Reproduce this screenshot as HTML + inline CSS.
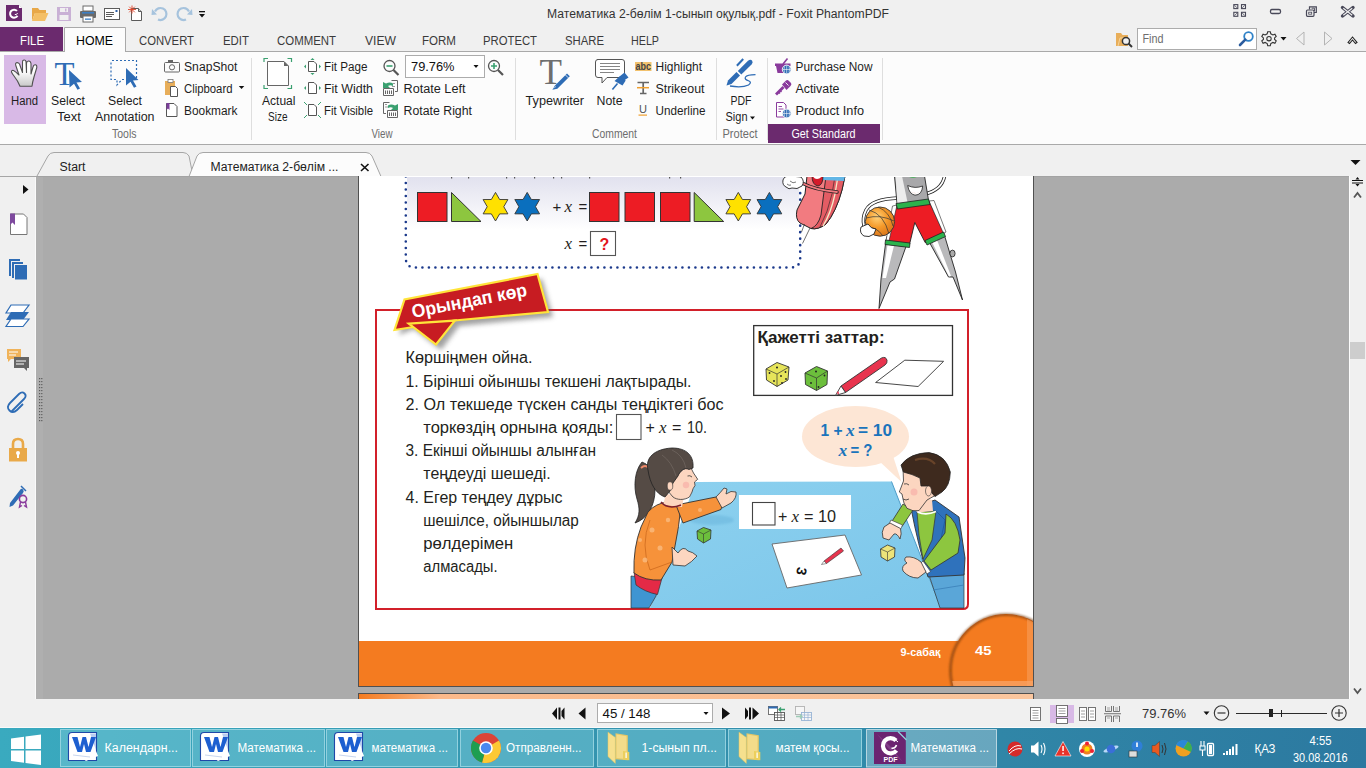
<!DOCTYPE html>
<html><head><meta charset="utf-8">
<style>
*{margin:0;padding:0}
html,body{width:1366px;height:768px;overflow:hidden;background:#f0f0f0}
svg{position:absolute;left:0;top:0;font-family:"Liberation Sans",sans-serif}
text{white-space:pre}
</style></head><body>
<svg width="1366" height="768" viewBox="0 0 1366 768">
<rect x="0" y="0" width="1366" height="52" fill="#f0f0f0"/>
<rect x="0" y="51" width="1366" height="1" fill="#a9a9a9"/>
<rect x="0" y="52" width="1366" height="92" fill="#fcfcfc"/>
<rect x="0" y="144" width="1366" height="1" fill="#a9a9a9"/>
<rect x="0" y="145" width="1366" height="31" fill="#f0f0f0"/>
<path d="M6 5 H19 L22 8 V21 H6 Z" fill="#6b2a6e"/>
<path d="M19 5 V8 H22 Z" fill="#f0f0f0"/><path d="M19 5 L22 8 H19 Z" fill="#fff"/>
<path d="M17 10.9 A4 4 0 1 0 17.5 15.8" fill="none" stroke="#fff" stroke-width="2"/><path d="M14.8 14.6 Q16.8 15 17.6 13" fill="none" stroke="#fff" stroke-width="1"/>
<path d="M32 8 H38 L39.5 10 H46 V13 H35 L32 21 Z" fill="#e8a848"/>
<path d="M35 13 H48.5 L45 21 H32 Z" fill="#f4bf66"/>
<rect x="57" y="7" width="14" height="14" fill="#c9b1d5"/>
<rect x="60" y="8" width="8" height="4" fill="#f0f0f0"/><rect x="65" y="8.5" width="1.5" height="3" fill="#c9b1d5"/>
<rect x="59.5" y="15" width="9" height="5" fill="#f0f0f0"/>
<rect x="83" y="6" width="10" height="5" fill="#fff" stroke="#6a6a6a"/>
<rect x="80" y="11" width="16" height="7" rx="1" fill="#6a6a6a"/>
<rect x="82" y="12" width="12" height="1.6" fill="#3c7fc4"/>
<rect x="83" y="16" width="10" height="6" fill="#fff" stroke="#6a6a6a"/>
<rect x="85" y="18.5" width="6" height="1.3" fill="#3c7fc4"/>
<rect x="104.5" y="8.5" width="15" height="11" fill="#fff" stroke="#5a5a5a"/>
<rect x="106" y="12" width="8" height="1" fill="#5a5a5a"/><rect x="106" y="14" width="8" height="1" fill="#5a5a5a"/><rect x="106" y="16" width="6" height="1" fill="#5a5a5a"/>
<rect x="115.5" y="10" width="2" height="2" fill="#2b5fa8"/>
<path d="M131.5 8.5 H138.5 L141.5 11.5 V20.5 H131.5 Z" fill="#fff" stroke="#5a5a5a"/>
<path d="M138.5 8.5 V11.5 H141.5" fill="#ccc" stroke="#5a5a5a"/>
<path d="M132 5.5 V13.5 M128 9.5 H136 M129.2 6.7 L134.8 12.3 M134.8 6.7 L129.2 12.3" stroke="#e0452a" stroke-width="0.9"/>
<path d="M155 11.5 A6 6 0 1 1 158 19.5" fill="none" stroke="#a6c3dd" stroke-width="2.2"/>
<path d="M152 9 L157 14.5 L151.5 15 Z" fill="#a6c3dd"/>
<path d="M189 11.5 A6 6 0 1 0 186 19.5" fill="none" stroke="#a6c3dd" stroke-width="2.2"/>
<path d="M192 9 L187 14.5 L192.5 15 Z" fill="#a6c3dd"/>
<rect x="199" y="11" width="6" height="1.3" fill="#111"/><path d="M199 14 H205 L202 17.5 Z" fill="#111"/>
<text x="547" y="17.8" font-size="12.5" fill="#333" textLength="342" lengthAdjust="spacingAndGlyphs">Математика 2-бөлім 1-сынып оқулық.pdf - Foxit PhantomPDF</text>
<g stroke="#484858" stroke-width="1.1" fill="none"><rect x="1233.8" y="4.6" width="4" height="4"/><rect x="1241.5" y="4.6" width="4" height="4"/><rect x="1233.8" y="12.3" width="4" height="4"/><rect x="1241.5" y="12.3" width="4" height="4"/><path d="M1234.5 5.3 L1237 7.8 M1244.8 5.3 L1242.3 7.8 M1234.5 15.6 L1237 13.1 M1244.8 15.6 L1242.3 13.1" stroke-width="0.8"/><rect x="1270.5" y="9.5" width="10" height="4" rx="1.5" stroke-width="1.3"/><path d="M1309.5 9.5 V6.8 H1316.3 V12.5 H1314" stroke-width="1.2"/><path d="M1311.8 8.5 V8.2 H1314.5 V11" stroke-width="0.9"/><rect x="1306.5" y="10" width="7.5" height="6.3" rx="1" stroke-width="1.2"/><rect x="1308.7" y="12.2" width="3" height="2" stroke-width="0.8"/></g>
<path d="M1342.5 7.5 L1353 16 M1353 7.5 L1342.5 16" stroke="#484858" stroke-width="3.4" stroke-linecap="round"/><path d="M1343.3 8.2 L1352.2 15.3 M1352.2 8.2 L1343.3 15.3" stroke="#f0f0f0" stroke-width="1.2"/>
<rect x="0" y="27" width="63" height="24" fill="#6b2a6e"/>
<path d="M64.5 52 V27.5 H125.5 V52" fill="#fcfcfc" stroke="#a9a9a9"/>
<rect x="65" y="50" width="60" height="3" fill="#fcfcfc"/>
<text x="20" y="45" font-size="12.5" fill="#fff" textLength="24" lengthAdjust="spacingAndGlyphs">FILE</text>
<text x="76" y="45" font-size="12.5" fill="#000" textLength="37" lengthAdjust="spacingAndGlyphs">HOME</text>
<text x="139" y="45" font-size="12.5" fill="#3a3a3a" textLength="55" lengthAdjust="spacingAndGlyphs">CONVERT</text>
<text x="223" y="45" font-size="12.5" fill="#3a3a3a" textLength="26" lengthAdjust="spacingAndGlyphs">EDIT</text>
<text x="277" y="45" font-size="12.5" fill="#3a3a3a" textLength="59" lengthAdjust="spacingAndGlyphs">COMMENT</text>
<text x="365" y="45" font-size="12.5" fill="#3a3a3a" textLength="31" lengthAdjust="spacingAndGlyphs">VIEW</text>
<text x="422" y="45" font-size="12.5" fill="#3a3a3a" textLength="34" lengthAdjust="spacingAndGlyphs">FORM</text>
<text x="483" y="45" font-size="12.5" fill="#3a3a3a" textLength="54" lengthAdjust="spacingAndGlyphs">PROTECT</text>
<text x="565" y="45" font-size="12.5" fill="#3a3a3a" textLength="39" lengthAdjust="spacingAndGlyphs">SHARE</text>
<text x="631" y="45" font-size="12.5" fill="#3a3a3a" textLength="28" lengthAdjust="spacingAndGlyphs">HELP</text>
<path d="M1116 33 H1121 L1122.5 35 H1128 V46 H1116 Z" fill="#e8ae5a"/>
<path d="M1118 46 L1120 38 H1126" fill="none" stroke="#f6d49a" stroke-width="1"/>
<circle cx="1126" cy="41" r="3.6" fill="#f0f0f0" stroke="#333" stroke-width="1.5"/><path d="M1128.5 43.5 L1132 47" stroke="#333" stroke-width="2"/>
<rect x="1137.5" y="28.5" width="119" height="21" fill="#fff" stroke="#acacac"/>
<text x="1142.5" y="42.8" font-size="12.5" fill="#6d6d6d" textLength="21" lengthAdjust="spacingAndGlyphs">Find</text>
<circle cx="1248.5" cy="36.5" r="4.3" fill="none" stroke="#2f82c8" stroke-width="1.8"/><path d="M1245.3 39.7 L1240 45" stroke="#2b5c9e" stroke-width="2.6" stroke-linecap="round"/>
<g transform="translate(1269,38.7)" fill="none" stroke="#333" stroke-width="1.1"><path d="M-1.3 -7 H1.3 L1.8 -4.9 L3.9 -3.7 L5.9 -4.5 L7.2 -2.2 L5.6 -0.8 V0.8 L7.2 2.2 L5.9 4.5 L3.9 3.7 L1.8 4.9 L1.3 7 H-1.3 L-1.8 4.9 L-3.9 3.7 L-5.9 4.5 L-7.2 2.2 L-5.6 0.8 V-0.8 L-7.2 -2.2 L-5.9 -4.5 L-3.9 -3.7 L-1.8 -4.9 Z"/><circle r="2.2"/></g>
<path d="M1280.5 37 H1286.5 L1283.5 40.5 Z" fill="#111"/>
<path d="M1304 32 V45 L1296.5 38.5 Z" fill="none" stroke="#b4b4b4"/>
<path d="M1324.5 32 V45 L1332 38.5 Z" fill="none" stroke="#b4b4b4"/>
<path d="M1348 42.5 L1352.5 37 L1357 42.5 L1355.5 43.5 L1352.5 40 L1349.5 43.5 Z" fill="none" stroke="#222" stroke-width="1.1"/>
<rect x="4" y="55" width="42" height="69" fill="#d8b9e6"/>
<defs><linearGradient id="hg" x1="0" y1="0" x2="0" y2="1"><stop offset="0.4" stop-color="#fff"/><stop offset="1" stop-color="#c8c8c8"/></linearGradient></defs>
<path d="M20 86.3 L32 86.3 Q32.5 82 34 77 L36.8 67.5 Q37 64.5 35 64.8 Q33.5 65 33 67 L31 74 L31 63.5 Q30.5 60.8 28.5 61 Q26.5 61.3 26.5 63.5 L26.5 72.5 L26 61.5 Q25.5 59.8 24 60 Q22.3 60.3 22.5 62 L22.5 72.5 L19.5 64 Q18 62 16.3 62.8 Q15 63.8 15.8 65.5 L19 75 Q15.5 71.5 13.5 70.5 Q11.3 70 11.5 72 Q12 73.5 14 76 Q18 81 20 86.3 Z" fill="url(#hg)" stroke="#505050" stroke-width="1.1" stroke-linejoin="round"/>
<text x="54.5" y="84.5" font-size="33" fill="#2e6cb5" font-family="Liberation Serif" textLength="20" lengthAdjust="spacingAndGlyphs">T</text>
<path d="M69 70 L82 82 L76.5 82.5 L80 88.5 L77.5 89.8 L74 83.8 L69.5 87.5 Z" fill="#2e6cb5"/>
<path d="M112 60.5 H136.5 V79.5 H122 L117 85 V79.5 H111 V61.5" fill="none" stroke="#2e6cb5" stroke-width="1.2" stroke-dasharray="2,2"/>
<path d="M126 68 L138.5 80 L133 80.5 L136.5 86.5 L134 87.8 L130.5 81.8 L126 85.5 Z" fill="#2e6cb5"/>
<rect x="164.5" y="62.5" width="15" height="9.5" rx="1" fill="none" stroke="#666"/><rect x="168" y="60" width="5" height="2.5" fill="#666"/><circle cx="172" cy="67.3" r="2.6" fill="none" stroke="#666"/>
<rect x="165" y="81" width="10" height="14" fill="#e8ae5a"/><rect x="168" y="79.5" width="5" height="3" fill="#fff" stroke="#777" stroke-width="0.8"/>
<path d="M170.5 86.5 H175.5 L177.5 88.5 V96.5 H170.5 Z" fill="#fff" stroke="#555"/>
<path d="M238.8 86 H244.3 L241.5 89 Z" fill="#111"/>
<path d="M166.5 103.5 H174 L177 106.5 V116.5 H166.5 Z" fill="#fff" stroke="#555"/>
<path d="M166.5 103 H169.5 V110 L168 108.5 L166.5 110 Z" fill="#7b3d9a"/>
<text x="11" y="105" font-size="12.5" fill="#1e1e1e" textLength="27" lengthAdjust="spacingAndGlyphs">Hand</text>
<text x="51" y="105" font-size="12.5" fill="#1e1e1e" textLength="34" lengthAdjust="spacingAndGlyphs">Select</text>
<text x="57" y="121" font-size="12.5" fill="#1e1e1e" textLength="24" lengthAdjust="spacingAndGlyphs">Text</text>
<text x="108" y="105" font-size="12.5" fill="#1e1e1e" textLength="34" lengthAdjust="spacingAndGlyphs">Select</text>
<text x="95" y="121" font-size="12.5" fill="#1e1e1e" textLength="59.5" lengthAdjust="spacingAndGlyphs">Annotation</text>
<text x="184" y="71" font-size="12.5" fill="#1e1e1e" textLength="53.5" lengthAdjust="spacingAndGlyphs">SnapShot</text>
<text x="184" y="93" font-size="12.5" fill="#1e1e1e" textLength="48.5" lengthAdjust="spacingAndGlyphs">Clipboard</text>
<text x="184" y="115" font-size="12.5" fill="#1e1e1e" textLength="53.5" lengthAdjust="spacingAndGlyphs">Bookmark</text>
<text x="112" y="138" font-size="12.5" fill="#6d6d6d" textLength="24.5" lengthAdjust="spacingAndGlyphs">Tools</text>
<rect x="251" y="58" width="1" height="82" fill="#dedede"/>
<g fill="none" stroke="#3aa070" stroke-width="1.2"><path d="M264 62 V58.5 H268 M287.5 58.5 H291.5 V62 M291.5 85 V88.5 H287.5 M268 88.5 H264 V85"/></g>
<path d="M267.5 61.5 H284 L288.5 66 V85.5 H267.5 Z" fill="#fff" stroke="#666" stroke-width="1"/><path d="M284 61.5 V66 H288.5 Z" fill="#666"/>
<path d="M308.5 61.5 H314 L316.5 64 V71.5 H308.5 Z" fill="#fff" stroke="#555"/>
<g fill="#3aa070"><path d="M312.5 58 L310.5 60 H314.5 Z M312.5 75 L310.5 73 H314.5 Z M304 66.5 L306 64.5 V68.5 Z M321 66.5 L319 64.5 V68.5 Z"/></g>
<path d="M308.5 82.5 H314 L316.5 85 V93.5 H308.5 Z" fill="#fff" stroke="#555"/>
<g fill="#3aa070"><path d="M304 88 L306 86 V90 Z M321 88 L319 86 V90 Z"/></g>
<path d="M308.5 104.5 H314 L316.5 107 V115.5 H308.5 Z" fill="#fff" stroke="#555"/>
<g stroke="#3aa070" stroke-width="1"><path d="M304 102 L307 105 M321 102 L318 105 M304 118 L307 115 M321 118 L318 115"/></g>
<text x="324" y="71.4" font-size="12.5" fill="#1e1e1e" textLength="43.5" lengthAdjust="spacingAndGlyphs">Fit Page</text>
<text x="324" y="93.2" font-size="12.5" fill="#1e1e1e" textLength="49" lengthAdjust="spacingAndGlyphs">Fit Width</text>
<text x="324" y="115" font-size="12.5" fill="#1e1e1e" textLength="49" lengthAdjust="spacingAndGlyphs">Fit Visible</text>
<circle cx="389.5" cy="66" r="5.5" fill="none" stroke="#555" stroke-width="1.3"/><path d="M393.5 70 L398.5 75" stroke="#555" stroke-width="2.2"/><path d="M386.5 66 H392.5" stroke="#3aa070" stroke-width="1.6"/>
<circle cx="494" cy="66" r="5.5" fill="none" stroke="#555" stroke-width="1.3"/><path d="M498 70 L503 75" stroke="#555" stroke-width="2.2"/><path d="M491 66 H497 M494 63 V69" stroke="#3aa070" stroke-width="1.6"/>
<rect x="405.5" y="55.5" width="79" height="22" fill="#fff" stroke="#acacac"/>
<text x="411" y="71.4" font-size="12.5" fill="#111" textLength="43.5" lengthAdjust="spacingAndGlyphs">79.76%</text>
<path d="M473.5 65 H478.5 L476 68 Z" fill="#111"/>
<g fill="none" stroke="#666" stroke-width="1"><path d="M391.5 80.5 H397.5 V91.5 H395"/><path d="M383.5 88.5 H393.5 V95.5 H383.5 Z"/><path d="M383.5 102.5 H389.5 M383.5 102.5 V113.5 H386"/><path d="M387.5 110.5 H397.5 V117.5 H387.5 Z"/></g>
<g stroke="#666" stroke-width="1"><path d="M385.5 90.5 V94 M387.5 90.5 V94 M389.5 90.5 V94 M391.5 90.5 V94 M389.5 112.5 V116 M391.5 112.5 V116 M393.5 112.5 V116 M395.5 112.5 V116"/></g>
<g fill="#999"><rect x="393" y="83" width="2" height="1"/><rect x="392" y="86" width="3" height="1"/><rect x="385" y="104" width="2" height="1"/><rect x="385" y="106.5" width="3" height="1"/></g>
<path d="M383 82 L386 83.5 Q390 81.5 393 83.5 L393 86 Q390 84.5 388 86 L390 88 H383 Z" fill="#3aa070"/>
<path d="M398 104 L395 105.5 Q391 103.5 388 105.5 L388 108 Q391 106.5 393 108 L391 110 H398 Z" fill="#3aa070"/>
<text x="403.5" y="93" font-size="12.5" fill="#1e1e1e" textLength="62" lengthAdjust="spacingAndGlyphs">Rotate Left</text>
<text x="403.5" y="115" font-size="12.5" fill="#1e1e1e" textLength="68.5" lengthAdjust="spacingAndGlyphs">Rotate Right</text>
<text x="262" y="105" font-size="12.5" fill="#1e1e1e" textLength="33.5" lengthAdjust="spacingAndGlyphs">Actual</text>
<text x="268" y="121" font-size="12.5" fill="#1e1e1e" textLength="19.5" lengthAdjust="spacingAndGlyphs">Size</text>
<text x="371.5" y="138" font-size="12.5" fill="#6d6d6d" textLength="21" lengthAdjust="spacingAndGlyphs">View</text>
<rect x="515" y="58" width="1" height="82" fill="#dedede"/>
<text x="539.5" y="84" font-size="35" fill="#6e6e6e" font-family="Liberation Serif" textLength="22.5" lengthAdjust="spacingAndGlyphs">T</text>
<path d="M554.5 86 L567 73.5 L569.8 76.3 L557.3 88.8 L552.4 89.8 Z" fill="#2e6cb5"/><path d="M565.5 75 L568.3 77.8" stroke="#fcfcfc" stroke-width="0.8"/><path d="M553 88 L556 86.5" stroke="#fcfcfc" stroke-width="0.6"/>
<path d="M597.5 59.5 H622 Q624.5 59.5 624.5 62 V75 Q624.5 77.5 622 77.5 H607 L602 83 V77.5 H598 Q595.5 77.5 595.5 75 V62 Q595.5 59.5 598 59.5 Z" fill="#fff" stroke="#555"/>
<path d="M600 63.5 H620 M600 66.5 H620 M600 69.5 H620 M600 72.5 H614" stroke="#777" stroke-width="0.9"/>
<path d="M612.4 89.6 L617.5 83.5" stroke="#2e6cb5" stroke-width="1.6"/><path d="M614.5 81 L620 76 L621 77 L625.7 80.6 L622.5 85.5 Z" fill="#2e6cb5"/><path d="M619.5 76.5 L624.5 72.5 L628.5 77.5 L624 80.5 Z" fill="#2e6cb5"/>
<rect x="635" y="62" width="16.5" height="9" fill="#f2c26e"/>
<text x="635.5" y="70" font-size="10.5" fill="#444" font-weight="bold" textLength="15.5" lengthAdjust="spacingAndGlyphs">abc</text>
<path d="M637.5 82.5 H649 M643.2 82.5 V93.5 M640 93.5 H646.5" stroke="#666" stroke-width="1.7"/><path d="M637 87.7 H649" stroke="#f0a030" stroke-width="1.5"/>
<text x="639" y="113" font-size="11" fill="#555" textLength="8" lengthAdjust="spacingAndGlyphs">U</text>
<rect x="638.5" y="114.5" width="8.5" height="1.2" fill="#f0a030"/>
<text x="655.5" y="71.4" font-size="12.5" fill="#1e1e1e" textLength="46.5" lengthAdjust="spacingAndGlyphs">Highlight</text>
<text x="655.5" y="93" font-size="12.5" fill="#1e1e1e" textLength="49" lengthAdjust="spacingAndGlyphs">Strikeout</text>
<text x="655.5" y="115" font-size="12.5" fill="#1e1e1e" textLength="50" lengthAdjust="spacingAndGlyphs">Underline</text>
<text x="525.5" y="105" font-size="12.5" fill="#1e1e1e" textLength="58.5" lengthAdjust="spacingAndGlyphs">Typewriter</text>
<text x="596.5" y="105" font-size="12.5" fill="#1e1e1e" textLength="26" lengthAdjust="spacingAndGlyphs">Note</text>
<text x="592" y="138" font-size="12.5" fill="#6d6d6d" textLength="45" lengthAdjust="spacingAndGlyphs">Comment</text>
<rect x="716" y="58" width="1" height="82" fill="#dedede"/>
<path d="M726.5 85.5 L728 80.5 L736.5 72 L740 75.5 L731.5 84 Z" fill="#2e6cb5"/>
<path d="M737.8 71 L748 60.8 Q750.5 58.8 752 60.6 Q753.5 62.5 751.5 64.5 L741.3 74.5 Z" fill="#2e6cb5"/>
<path d="M736.9 65.7 L743.2 59" stroke="#2e6cb5" stroke-width="2"/>
<path d="M755.5 74.6 Q747 74.6 745.5 77 Q744 79.5 749 81 Q752 82.5 748.5 85 Q742 88 730 86" fill="none" stroke="#2e6cb5" stroke-width="1.3"/>
<text x="730.5" y="105" font-size="12.5" fill="#1e1e1e" textLength="21" lengthAdjust="spacingAndGlyphs">PDF</text>
<text x="725.5" y="121" font-size="12.5" fill="#1e1e1e" textLength="22" lengthAdjust="spacingAndGlyphs">Sign</text>
<path d="M750 116.5 H755 L752.5 119.5 Z" fill="#111"/>
<text x="722.5" y="138" font-size="12.5" fill="#6d6d6d" textLength="35" lengthAdjust="spacingAndGlyphs">Protect</text>
<rect x="767" y="58" width="1" height="82" fill="#dedede"/>
<path d="M775 63.5 H790.5 V66 H788 L786.5 73 H777.5 L776 66 H775 Z" fill="#8a3b9c"/><path d="M783 64 L787.5 58.5" stroke="#8a3b9c" stroke-width="1.6"/>
<circle cx="786.7" cy="69.5" r="4.4" fill="#2e6cb5" stroke="#fcfcfc" stroke-width="0.9"/><path d="M782.5 69.5 H791 M786.7 65.3 V73.7 M784.5 66.5 Q783.5 69.5 784.5 72.5 M789 66.5 Q790 69.5 789 72.5" stroke="#fcfcfc" stroke-width="0.6" fill="none"/>
<path d="M776 94.5 L783.5 87" stroke="#8a3b9c" stroke-width="2.8"/><path d="M782 84.5 L786 80.5 Q787.5 79.5 789 81 L791 83 Q792 84.5 790.5 86 L786.5 90 Z" fill="#8a3b9c"/><path d="M785.5 82.5 L788.5 85.5" stroke="#fcfcfc" stroke-width="0.9"/><path d="M778 91.5 L780 93.5 M779.5 90 L781.5 92" stroke="#8a3b9c" stroke-width="1.4"/>
<path d="M776.5 102.5 H783.5 L786 105 V117 H776.5 Z" fill="#fff" stroke="#8a3b9c"/><path d="M778.5 106.5 H782 M778.5 109 H783.5 M778.5 111.5 H781" stroke="#8a3b9c" stroke-width="0.9"/>
<circle cx="786.7" cy="113.5" r="4.4" fill="#2e6cb5" stroke="#fcfcfc" stroke-width="0.9"/><path d="M782.5 113.5 H791 M786.7 109.3 V117.7 M784.5 110.5 Q783.5 113.5 784.5 116.5 M789 110.5 Q790 113.5 789 116.5" stroke="#fcfcfc" stroke-width="0.6" fill="none"/>
<text x="795.5" y="71.4" font-size="12.5" fill="#1e1e1e" textLength="77" lengthAdjust="spacingAndGlyphs">Purchase Now</text>
<text x="795.5" y="93" font-size="12.5" fill="#1e1e1e" textLength="44" lengthAdjust="spacingAndGlyphs">Activate</text>
<text x="795.5" y="115" font-size="12.5" fill="#1e1e1e" textLength="68.5" lengthAdjust="spacingAndGlyphs">Product Info</text>
<rect x="768" y="124" width="112" height="19" fill="#6b2a6e"/>
<text x="791.5" y="137.5" font-size="12.5" fill="#fff" textLength="64" lengthAdjust="spacingAndGlyphs">Get Standard</text>
<rect x="882" y="58" width="1" height="82" fill="#dedede"/>
<path d="M37 176 L48 156 Q50 152.5 54 152.5 H183 Q187 152.5 189 156 L193 176" fill="#f0f0f0" stroke="#a6a6a6"/>
<path d="M189 176.5 L197 156 Q199 152.5 203 152.5 H366 Q370 152.5 372 156 L381 176.5" fill="#fcfcfc" stroke="#a6a6a6"/>
<text x="59.5" y="170.7" font-size="12.5" fill="#222" textLength="26" lengthAdjust="spacingAndGlyphs">Start</text>
<text x="210.5" y="170.7" font-size="12.5" fill="#222" textLength="128" lengthAdjust="spacingAndGlyphs">Математика 2-бөлім ...</text>
<path d="M361 164 L368.5 171 M368.5 164 L361 171" stroke="#111" stroke-width="1.6"/>
<path d="M1350.5 160 H1360.5 L1355.5 165 Z" fill="#111"/>
<rect x="0" y="176" width="36" height="523" fill="#f0f0f0"/>
<rect x="0" y="176" width="37" height="1" fill="#a6a6a6"/>
<path d="M23 185 L28.5 189.5 L23 194 Z" fill="#111"/>
<path d="M10.5 214 H23.5 L27 217.5 V234.5 H10.5 Z" fill="#fff" stroke="#777"/>
<path d="M10 213.5 H15 V225 L12.5 222.5 L10 225 Z" fill="#7e4a9e"/>
<path d="M9 259 H20 V261 H11 V276 H9 Z M12 262 H23 V264 H14 V278 H12 Z" fill="#2e6cb5"/>
<rect x="15" y="265" width="12" height="14.5" fill="#2e6cb5"/>
<path d="M11 305 H29 L23 313 H6 Z" fill="#fff" stroke="#2e6cb5" stroke-width="1.2"/>
<path d="M11 312 H29 L23 320 H6 Z" fill="#2e6cb5"/>
<path d="M11 319 H29 L23 326.5 H6 Z" fill="#fff" stroke="#2e6cb5" stroke-width="1.2"/>
<path d="M7 349 H21 V359 H11 L8 362 V359 H7 Z" fill="#f0b35a"/><path d="M9 352 H18 M9 355 H16" stroke="#fff" stroke-width="1"/>
<path d="M14 357 H29 V368 H27 V371 L24 368 H14 Z" fill="#666"/><path d="M16 361 H26 M16 364 H24" stroke="#fff" stroke-width="1"/>
<path d="M11 412 L24 399 Q27 396 24.5 393.5 Q22 391 19 394 L10 403 Q6 407 9.5 410.5 Q13 414 17 410 L23 404" fill="none" stroke="#2e6cb5" stroke-width="1.8"/>
<path d="M13 449 V444 Q13 439 18 439 Q23 439 23 444 V449" fill="none" stroke="#e9a949" stroke-width="2.6"/>
<rect x="9" y="448" width="18" height="13.5" fill="#e9a949"/><circle cx="18" cy="453" r="2" fill="#fff"/><rect x="17" y="453" width="2" height="5" fill="#fff"/>
<path d="M10 503 L20 490 Q21.5 488 23 489.5 Q24.5 491 23 493 L13 505.5 L9.5 507 Z" fill="#2e6cb5"/><path d="M21 486 L26 491" stroke="#2e6cb5" stroke-width="1.5"/>
<circle cx="23" cy="499" r="3.6" fill="none" stroke="#8a3b9c" stroke-width="1.6"/><path d="M20.5 502 L19.5 507 L22 505.5 M25.5 502 L26.5 507 L24 505.5" fill="none" stroke="#8a3b9c" stroke-width="1.4"/>
<rect x="36" y="176" width="1314" height="523" fill="#ababab"/>
<rect x="36" y="176" width="1314" height="1" fill="#a3a3a3"/>
<rect x="35" y="177" width="1" height="522" fill="#fafafa"/>
<rect x="36" y="177" width="7" height="522" fill="#afafaf"/>
<g fill="#5a5a5a"><rect x="39" y="378" width="1.2" height="1.2"/><rect x="41.2" y="378" width="1.2" height="1.2"/><rect x="39" y="381" width="1.2" height="1.2"/><rect x="41.2" y="381" width="1.2" height="1.2"/><rect x="39" y="384" width="1.2" height="1.2"/><rect x="41.2" y="384" width="1.2" height="1.2"/><rect x="39" y="387" width="1.2" height="1.2"/><rect x="41.2" y="387" width="1.2" height="1.2"/><rect x="39" y="390" width="1.2" height="1.2"/><rect x="41.2" y="390" width="1.2" height="1.2"/><rect x="39" y="393" width="1.2" height="1.2"/><rect x="41.2" y="393" width="1.2" height="1.2"/><rect x="39" y="396" width="1.2" height="1.2"/><rect x="41.2" y="396" width="1.2" height="1.2"/><rect x="39" y="399" width="1.2" height="1.2"/><rect x="41.2" y="399" width="1.2" height="1.2"/><rect x="39" y="402" width="1.2" height="1.2"/><rect x="41.2" y="402" width="1.2" height="1.2"/><rect x="39" y="405" width="1.2" height="1.2"/><rect x="41.2" y="405" width="1.2" height="1.2"/><rect x="39" y="408" width="1.2" height="1.2"/><rect x="41.2" y="408" width="1.2" height="1.2"/><rect x="39" y="411" width="1.2" height="1.2"/><rect x="41.2" y="411" width="1.2" height="1.2"/><rect x="39" y="414" width="1.2" height="1.2"/><rect x="41.2" y="414" width="1.2" height="1.2"/><rect x="39" y="417" width="1.2" height="1.2"/><rect x="41.2" y="417" width="1.2" height="1.2"/><rect x="39" y="420" width="1.2" height="1.2"/><rect x="41.2" y="420" width="1.2" height="1.2"/></g>
<rect x="1349" y="176" width="17" height="523" fill="#f0f0f0"/>
<rect x="1349" y="176" width="1" height="523" fill="#fcfcfc"/>
<path d="M1352 180.5 H1363 M1352 183 H1363" stroke="#111" stroke-width="1.2"/><path d="M1357.5 177 L1355.5 179.5 H1359.5 Z M1357.5 186.5 L1355.5 184 H1359.5 Z" fill="#111"/>
<path d="M1354 197.5 L1357.5 193 L1361 197.5" fill="none" stroke="#555" stroke-width="1.8"/>
<rect x="1350" y="342" width="15" height="17" fill="#cdcdcd"/>
<path d="M1354 688.5 L1357.5 693 L1361 688.5" fill="none" stroke="#555" stroke-width="1.8"/><defs><linearGradient id="lav" x1="0" y1="0" x2="0" y2="1"><stop offset="0" stop-color="#e1e1ee"/><stop offset="1" stop-color="#ffffff"/></linearGradient><filter id="sh" x="-20%" y="-20%" width="140%" height="160%"><feGaussianBlur stdDeviation="2.5"/></filter><filter id="blur1"><feGaussianBlur stdDeviation="1.2"/></filter><radialGradient id="ball" cx="0.4" cy="0.35" r="0.7"><stop offset="0" stop-color="#ffd27a"/><stop offset="0.5" stop-color="#f59a2a"/><stop offset="1" stop-color="#d8731a"/></radialGradient><linearGradient id="tbl" x1="0" y1="0" x2="1" y2="1"><stop offset="0" stop-color="#8dd1ef"/><stop offset="1" stop-color="#7cc6ea"/></linearGradient><linearGradient id="np" x1="0" y1="0" x2="1" y2="0"><stop offset="0" stop-color="#f47b20"/><stop offset="0.12" stop-color="#fbb98a"/><stop offset="1" stop-color="#fac69e"/></linearGradient><clipPath id="pg"><rect x="359" y="177" width="674" height="509"/></clipPath></defs>
<rect x="358" y="176" width="676" height="511" fill="#fff"/>
<g clip-path="url(#pg)">
<rect x="407" y="176" width="392" height="54" fill="url(#lav)"/>
<g fill="#555"><rect x="451" y="177" width="1.2" height="1.5"/><rect x="468" y="177" width="1.2" height="1.5"/><rect x="506" y="177" width="1.2" height="1.5"/><rect x="514" y="177" width="1.2" height="1.5"/><rect x="534" y="177" width="1.2" height="1.5"/><rect x="553" y="177" width="1.2" height="1.5"/><rect x="561" y="177" width="1.2" height="1.5"/><rect x="589" y="177" width="1.2" height="1.5"/><rect x="669" y="177" width="1.2" height="1.5"/><rect x="680" y="177" width="1.2" height="1.5"/></g>
<path d="M405.8 170 V258 Q405.8 267.5 415 267.5 H791 Q800.2 267.5 800.2 258 V189" fill="none" stroke="#1c3a8c" stroke-width="2.6" stroke-linecap="round" stroke-dasharray="0 6.5"/>
<rect x="417.5" y="192.5" width="29.5" height="29" fill="#ed1c24" stroke="#333" stroke-width="1"/>
<rect x="589.5" y="192.5" width="29.5" height="29" fill="#ed1c24" stroke="#333" stroke-width="1"/>
<rect x="625.0" y="192.5" width="29.5" height="29" fill="#ed1c24" stroke="#333" stroke-width="1"/>
<rect x="660.5" y="192.5" width="29.5" height="29" fill="#ed1c24" stroke="#333" stroke-width="1"/>
<path d="M451.5 192.5 V221.5 H481 Z" fill="#8dc63f" stroke="#333" stroke-width="1"/>
<path d="M694.2 192.5 V221.5 H723.7 Z" fill="#8dc63f" stroke="#333" stroke-width="1"/>
<polygon points="495.50,192.40 499.65,199.52 507.88,199.55 503.79,206.70 507.88,213.85 499.65,213.88 495.50,221.00 491.35,213.88 483.12,213.85 487.21,206.70 483.12,199.55 491.35,199.52" fill="#ffe100" stroke="#333" stroke-width="0.9"/>
<polygon points="527.20,192.40 531.35,199.52 539.58,199.55 535.49,206.70 539.58,213.85 531.35,213.88 527.20,221.00 523.05,213.88 514.82,213.85 518.91,206.70 514.82,199.55 523.05,199.52" fill="#0a6fbe" stroke="#333" stroke-width="0.9"/>
<polygon points="738.30,192.40 742.45,199.52 750.68,199.55 746.59,206.70 750.68,213.85 742.45,213.88 738.30,221.00 734.15,213.88 725.92,213.85 730.01,206.70 725.92,199.55 734.15,199.52" fill="#ffe100" stroke="#333" stroke-width="0.9"/>
<polygon points="769.40,192.40 773.55,199.52 781.78,199.55 777.69,206.70 781.78,213.85 773.55,213.88 769.40,221.00 765.25,213.88 757.02,213.85 761.11,206.70 757.02,199.55 765.25,199.52" fill="#0a6fbe" stroke="#333" stroke-width="0.9"/>
<text x="552.5" y="212" font-size="15" fill="#231f20">+</text>
<text x="564.5" y="211.8" font-size="17" fill="#231f20" font-style="italic" font-family="Liberation Serif">x</text>
<text x="578.5" y="211.8" font-size="15" fill="#231f20">=</text>
<text x="564.5" y="248.6" font-size="17" fill="#231f20" font-style="italic" font-family="Liberation Serif">x</text>
<text x="578.5" y="248.6" font-size="15" fill="#231f20">=</text>
<rect x="590.5" y="231.5" width="25" height="24" fill="#fff" stroke="#555" stroke-width="1.1"/>
<text x="599.5" y="249.5" font-size="16" fill="#e3141c" font-weight="bold">?</text>
<path d="M807 176 L805 194 L797 210 Q795 219 800 223 L811 228.5 Q818 230 826 224 Q836 212 842 190 L845 176 Z" fill="#f27b80" stroke="#222" stroke-width="1"/>
<path d="M826 176 L821 215 Q818 226 811 228.5 Q818 230 826 224 Q836 212 842 190 L845 176 Z" fill="#e45c64" stroke="#222" stroke-width="0.9"/>
<path d="M838 176 L835 194 Q831 213 823 226" fill="none" stroke="#f4ebc8" stroke-width="1.3"/>
<path d="M835 176 L832 194 Q828 212 820 227" fill="none" stroke="#222" stroke-width="0.6"/>
<path d="M823 176 H845 L844 181 L823 180 Z" fill="#62b6e6"/>
<path d="M812 176 Q812 185 818 186 Q823 185 823 176 Z" fill="#d41a2a" stroke="#222" stroke-width="0.8"/><path d="M813 176 H822 Q820 179 817 179 Q814 179 813 176 Z" fill="#fff"/>
<path d="M802 183 Q815 190 837 192" fill="none" stroke="#222" stroke-width="3.4" stroke-linecap="round"/><path d="M802 183 Q815 190 837 192" fill="none" stroke="#f27b80" stroke-width="1.8" stroke-linecap="round"/>
<path d="M783 180 Q784 176 790 176 L801 177 Q805 181 802 186 Q797 190 792 188 Q789 190 786 187 Q782 185 783 180 Z" fill="#fff" stroke="#222" stroke-width="0.9"/>
<path d="M790 181 Q793 184 796 182 M787 184 Q789 186 791 185" fill="none" stroke="#222" stroke-width="0.6"/>
<path d="M804.5 224 L801.5 232 M810 228 L802.5 243.5" stroke="#333" stroke-width="0.7"/>
<path d="M925 194 Q942 190 944.6 176" fill="none" stroke="#222" stroke-width="3.4"/><path d="M925 194 Q942 190 944.6 176" fill="none" stroke="#fff" stroke-width="1.8"/>
<path d="M898 198 Q872 199 866 210 Q862 218 864 226" fill="none" stroke="#222" stroke-width="3.4"/><path d="M898 198 Q872 199 866 210 Q862 218 864 226" fill="none" stroke="#fff" stroke-width="1.8"/>
<path d="M885.5 244 L906 246.5 L894.5 279 L890 282 L879 308.5 L881 279 Z" fill="#b9b9bb" stroke="#222" stroke-width="0.9"/>
<path d="M887.5 245 L894 245.8 L886 278 L882.5 278 Z" fill="#fff"/>
<path d="M929.5 242.5 L944.5 235.5 L955.5 272 L962.5 300 L953 277 L948.5 277 Z" fill="#b9b9bb" stroke="#222" stroke-width="0.9"/>
<path d="M932 242 L937 240 L951 276 L949 276.5 Z" fill="#fff"/>
<ellipse cx="952.5" cy="253.5" rx="2.6" ry="3.4" fill="#aaa" stroke="#222" stroke-width="0.8"/>
<path d="M894.5 176 H924.5 L928.8 202 L897.2 205.5 Z" fill="#a8a8aa" stroke="#222" stroke-width="0.9"/>
<path d="M895.5 176 H902 L908 204.5 L897.5 205 Z" fill="#ececec"/>
<path d="M908 176.5 Q913 179 918 176.5" fill="#36b34a"/>
<path d="M907.7 185.5 Q915 189 922.7 186 Q922 195 915 195.2 Q909 194 907.7 185.5 Z" fill="#fff" stroke="#222" stroke-width="0.8"/>
<path d="M911 191.5 Q915 195 919.5 191.5 Q916 194.5 911 191.5 Z" fill="#e09080"/>
<path d="M897 205 L929 201 L944 233.5 L925.3 242.7 L914.8 222.5 L909.5 244.4 L885.8 241 Z" fill="#ed1c24" stroke="#222" stroke-width="0.9"/>
<path d="M897 205 L892.5 206 L886 240.5 L889 241 Z M929 201 L934 200.5 L946 232 L943.5 233.5 Z" fill="#fff" stroke="#222" stroke-width="0.6"/>
<path d="M896 203.5 L928.5 199 L930 204.5 L897.5 209 Z" fill="#2bb24c" stroke="#222" stroke-width="0.8"/>
<path d="M885.5 240 L910 243 L909.5 247.5 L885 244.5 Z M925 240.5 L943.5 232 L945.5 236.5 L927 245 Z" fill="#2bb24c" stroke="#222" stroke-width="0.8"/>
<circle cx="880" cy="221.6" r="14.6" fill="url(#ball)" stroke="#333" stroke-width="0.9"/>
<path d="M866 218 Q880 214 894 221 M869 210 Q884 214 889 234 M878 207 Q890 212 893 226 M867 228 Q876 226 883 236" fill="none" stroke="#333" stroke-width="0.7"/>
<path d="M861 227 Q859 233 864 236 Q869 238 874 234 L876 229 Q871 229 868 224 Z" fill="#fff" stroke="#222" stroke-width="0.9"/>
<path d="M376 310 H968 V604 Q968 609 963 609 H376 Z" fill="none" stroke="#d2202a" stroke-width="2"/>
<g filter="url(#sh)" opacity="0.55"><path d="M399 335 L409 304 L542 279 L553 317 L459 326 L441 350 L414 329 Z" fill="#555"/></g>
<path d="M394.5 330 L404.5 299.5 L537.5 274 L548 312 L454.5 320.5 Z" fill="#c71c22" stroke="#ffe43a" stroke-width="2.2" stroke-linejoin="miter"/>
<path d="M408.8 323.6 L454.9 320.6 L436 344.5 Z" fill="#c71c22" stroke="#ffe43a" stroke-width="2.2"/>
<text x="0" y="0" font-size="18.5" fill="#fff" font-weight="bold" textLength="117" lengthAdjust="spacingAndGlyphs" transform="translate(413,318) rotate(-11)">Орындап көр</text>
<text x="405.5" y="363.2" font-size="16" fill="#231f20" textLength="127" lengthAdjust="spacingAndGlyphs">Көршіңмен ойна.</text>
<text x="405.5" y="386.5" font-size="16" fill="#231f20" textLength="286" lengthAdjust="spacingAndGlyphs">1. Бірінші ойыншы текшені лақтырады.</text>
<text x="405.5" y="409.7" font-size="16" fill="#231f20" textLength="318" lengthAdjust="spacingAndGlyphs">2. Ол текшеде түскен санды теңдіктегі бос</text>
<text x="423.3" y="433" font-size="16" fill="#231f20" textLength="190" lengthAdjust="spacingAndGlyphs">торкөздің орнына қояды:</text>
<text x="405.5" y="456.2" font-size="16" fill="#231f20" textLength="190.5" lengthAdjust="spacingAndGlyphs">3. Екінші ойыншы алынған</text>
<text x="423.3" y="479.4" font-size="16" fill="#231f20" textLength="127.5" lengthAdjust="spacingAndGlyphs">теңдеуді шешеді.</text>
<text x="405.5" y="502.6" font-size="16" fill="#231f20" textLength="157" lengthAdjust="spacingAndGlyphs">4. Егер теңдеу дұрыс</text>
<text x="423.3" y="525.8" font-size="16" fill="#231f20" textLength="155.5" lengthAdjust="spacingAndGlyphs">шешілсе, ойыншылар</text>
<text x="423.3" y="549" font-size="16" fill="#231f20" textLength="90" lengthAdjust="spacingAndGlyphs">рөлдерімен</text>
<text x="423.3" y="572.2" font-size="16" fill="#231f20" textLength="74.2" lengthAdjust="spacingAndGlyphs">алмасады.</text>
<rect x="616.5" y="414.5" width="24.5" height="25" fill="#fff" stroke="#555" stroke-width="1.1"/>
<text x="645.5" y="433" font-size="16" fill="#231f20">+</text>
<text x="659" y="433" font-size="17" fill="#231f20" font-style="italic" font-family="Liberation Serif">x</text>
<text x="672" y="433" font-size="16" fill="#231f20">=</text>
<text x="687" y="433" font-size="16" fill="#231f20" textLength="20" lengthAdjust="spacingAndGlyphs">10.</text>
<rect x="753.7" y="325.6" width="198.8" height="69.8" fill="#fff" stroke="#333" stroke-width="1.3"/>
<text x="757.6" y="342.9" font-size="16.5" fill="#231f20" font-weight="bold" textLength="127" lengthAdjust="spacingAndGlyphs">Қажетті заттар:</text>
<path d="M766 369 L777 362.5 L789 367 L788 380 L777 386.5 L766.5 380 Z" fill="#e6e45a" stroke="#333" stroke-width="0.9"/>
<path d="M766 369 L777 374 L789 367 M777 374 V386.5" fill="none" stroke="#333" stroke-width="0.7"/>
<g fill="#222"><circle cx="777" cy="367.5" r="1"/><circle cx="769.5" cy="373" r="0.9"/><circle cx="774" cy="381" r="0.9"/><circle cx="781" cy="376" r="0.9"/><circle cx="785.5" cy="372" r="0.9"/><circle cx="782" cy="383" r="0.9"/><circle cx="786" cy="379" r="0.9"/></g>
<path d="M805 373 L816.5 366.5 L827.5 371 L827 384.5 L816.5 390.5 L805.5 384.5 Z" fill="#6cbf3c" stroke="#333" stroke-width="0.9"/>
<path d="M805 373 L816.5 378 L827.5 371 M816.5 378 V390.5" fill="none" stroke="#333" stroke-width="0.7"/>
<g fill="#222"><circle cx="816" cy="371.5" r="1"/><circle cx="811" cy="383" r="0.9"/><circle cx="824.5" cy="375.5" r="0.9"/><circle cx="818.5" cy="387" r="0.9"/></g>
<path d="M841 386 L881.5 358 Q886 356 887 360.5 Q887.5 363 885 365 L845.5 392.5 Z" fill="#e8344e" stroke="#333" stroke-width="0.9"/>
<path d="M841 386 L845.5 392.5 L835.5 395.5 Z" fill="#fff" stroke="#333" stroke-width="0.9"/>
<path d="M836.5 393 L838.5 391 L839 394.5 Z" fill="#e8344e"/>
<path d="M875.6 382.5 L904.8 360.2 L943.6 361.3 L918.1 386.5 Z" fill="#fff" stroke="#333" stroke-width="0.9"/>
<path d="M878 460 L901.5 482 L893 456 Z" fill="#fde6d5"/>
<ellipse cx="855.5" cy="436.5" rx="53.5" ry="30.5" fill="#fde6d5"/>
<text x="820.5" y="436" font-size="16" fill="#1a74bc" font-weight="bold" textLength="22" lengthAdjust="spacingAndGlyphs">1 +</text>
<text x="846" y="436" font-size="17.5" fill="#1a74bc" font-weight="bold" font-style="italic" font-family="Liberation Serif">x</text>
<text x="858" y="436" font-size="16" fill="#1a74bc" font-weight="bold" textLength="34" lengthAdjust="spacingAndGlyphs">= 10</text>
<text x="838.5" y="455.8" font-size="17.5" fill="#1a74bc" font-weight="bold" font-style="italic" font-family="Liberation Serif">x</text>
<text x="850.5" y="455.8" font-size="16" fill="#1a74bc" font-weight="bold" textLength="22" lengthAdjust="spacingAndGlyphs">= ?</text>
<path d="M695.5 482 L891.5 481.5 L941 608 L650 608 Z" fill="url(#tbl)"/>
<path d="M891.5 481.5 L941 608" stroke="#4d9cc8" stroke-width="1"/>
<ellipse cx="712" cy="520" rx="22" ry="5" fill="#6db8de" opacity="0.6" filter="url(#blur1)"/>
<rect x="739" y="495" width="112" height="34" fill="#fff"/>
<rect x="752.5" y="502.5" width="22.5" height="22.5" fill="#fff" stroke="#444" stroke-width="1.1"/>
<text x="778" y="521.5" font-size="16" fill="#231f20">+</text>
<text x="791.5" y="521.5" font-size="17" fill="#231f20" font-style="italic" font-family="Liberation Serif">x</text>
<text x="804" y="521.5" font-size="16" fill="#231f20" textLength="32" lengthAdjust="spacingAndGlyphs">= 10</text>
<path d="M772 544 L845 535 L861.5 575 L787 588 Z" fill="#fff" stroke="#666" stroke-width="0.9"/>
<text x="0" y="0" font-size="14" fill="#111" font-weight="bold" transform="translate(797.5,566.5) rotate(100)">3</text>
<path d="M824 561 L841 548 L843.5 551 L826.5 563.5 Z" fill="#e8344e" stroke="#333" stroke-width="0.6"/><path d="M824 561 L826.5 563.5 L821.5 564.5 Z" fill="#fff" stroke="#333" stroke-width="0.5"/>
<path d="M697 531 L703.5 527.5 L711 530 L710.5 539 L703.5 543 L697.5 539 Z" fill="#6cbf3c" stroke="#333" stroke-width="0.8"/>
<path d="M697 531 L703.5 534 L711 530 M703.5 534 V543" fill="none" stroke="#333" stroke-width="0.6"/>
<path d="M880.5 549 L887.5 545 L895 548 L894.5 557 L887.5 561 L881 557 Z" fill="#ede47a" stroke="#333" stroke-width="0.8"/>
<path d="M880.5 549 L887.5 552 L895 548 M887.5 552 V561" fill="none" stroke="#333" stroke-width="0.6"/>
<path d="M631 576 L660 579 L656 596 L649 608 L631 608 Z" fill="#3f95d2" stroke="#333" stroke-width="0.7"/>
<path d="M634 572 L662 578 L657.5 594.5 Q645 592 636 585 Z" fill="#e42a46" stroke="#333" stroke-width="0.7"/>
<path d="M642 462 C635 470 633 486 637 499 C640 509 640 515 635 523 C647 519 655 506 655 490 C655 478 651 469 646 464 Z" fill="#554b45" stroke="#222" stroke-width="0.8"/>
<path d="M641 468 Q645 464 649 468" fill="none" stroke="#f08a6a" stroke-width="1.8"/>
<path d="M648 512 Q656 503 668 502 L681 505 Q679 528 675 546 L672 562 L661 580 Q645 581 634 573 Q633 548 641 527 Z" fill="#f6923a" stroke="#333" stroke-width="0.9"/>
<path d="M650 520 Q640 545 650 570 L672 562" fill="none" stroke="#c8641a" stroke-width="0.7"/>
<path d="M676 505 L716 497 L723 502 L721 509.5 L683 523 Z" fill="#f6923a" stroke="#333" stroke-width="0.9"/>
<path d="M716 497 Q721 492 724 488 L727 489 L726 494 Q731 490 736 492 Q737 498 731 503 L722 508 Z" fill="#fcd6c0" stroke="#333" stroke-width="0.8"/>
<path d="M672 547 L678 553 Q683 545 688 551 Q693 552 697 556 Q692 562 685 566 L673 565 Z" fill="#fcd6c0" stroke="#333" stroke-width="0.8"/>
<path d="M666 494 L684 496 L682 507 L663 505 Z" fill="#fcd6c0"/>
<path d="M661 502 Q668 510 681 505" fill="none" stroke="#7a1f2e" stroke-width="1.5"/>
<path d="M691 468 L693.5 473 L697.7 479.3 L694.5 482 L695 485.5 L693 488.8 L692 492 L689.5 497 C684 500.5 677 500 673 497 L667 490 L673 482 L678 475 C681 470 686 467 691 468 Z" fill="#fcd6c0" stroke="#333" stroke-width="0.8"/>
<path d="M648 470 C645 458 654 449 672 448 C687 448 694 456 693 468 L689 469.5 C684 467 680 471 678 476 L673 483 L670 491 L665 497 C656 494 650 484 648 470 Z" fill="#554b45" stroke="#222" stroke-width="0.8"/>
<path d="M672 450 Q683 455 686 468 M662 455 Q672 462 676 476" fill="none" stroke="#6e655e" stroke-width="0.8"/>
<ellipse cx="670" cy="486" rx="2.8" ry="4.2" fill="#fcd6c0" stroke="#333" stroke-width="0.6"/>
<circle cx="686" cy="485" r="3.2" fill="#f6a6a0" opacity="0.55"/>
<path d="M687.5 476 Q690 475 692 477" fill="none" stroke="#333" stroke-width="0.8"/>
<g fill="#fbbf85" opacity="0.75"><circle cx="652" cy="530" r="2.5"/><circle cx="660" cy="548" r="2.5"/><circle cx="645" cy="560" r="2.5"/><circle cx="668" cy="520" r="2.2"/><circle cx="700" cy="510" r="2"/><circle cx="640" cy="540" r="2"/></g>
<path d="M929 575 L964 573 L964 608 L940 608 Z" fill="#5aa6d8" stroke="#333" stroke-width="0.7"/>
<path d="M933 590 L964 585" stroke="#3a7fb8" stroke-width="0.8"/>
<path d="M911 508 L935 500 L959 517 L965 558 L964 575 L928 577 Q918 545 911 508 Z" fill="#2f72bc" stroke="#333" stroke-width="0.9"/>
<path d="M917 512 L936 511 L932 540 L923 559 Q918 535 917 512 Z" fill="#8dc63f" stroke="#333" stroke-width="0.7"/>
<path d="M936 511 L945 520 L937 558 L925 563" fill="none" stroke="#1f5a9e" stroke-width="0.9"/>
<path d="M946 514 Q957 520 960 540 L958 553 L931 570 L924 561 L945 533 Z" fill="#8dc63f" stroke="#333" stroke-width="0.8"/>
<path d="M923 561 L930.5 571.5 L927 574 L920.5 563.5 Z" fill="#fff" stroke="#333" stroke-width="0.6"/>
<path d="M921 562 Q914 556 906 557 Q903 560 907 563 Q901 566 903 571 Q909 578 918 578 L926 572 Z" fill="#fcd6c0" stroke="#333" stroke-width="0.8"/>
<path d="M903 504 L913 510 L902 526.5 L891.5 522 Z" fill="#8dc63f" stroke="#333" stroke-width="0.8"/>
<path d="M891 520 L902.5 525 L900.5 529.5 L889 524 Z" fill="#fff" stroke="#333" stroke-width="0.6"/>
<path d="M890 523 L900.5 528.5 Q902 534 900 539 Q897 533 894 534 L889 540 L883 538 Q881 532 884 527 Z" fill="#fcd6c0" stroke="#333" stroke-width="0.8"/>
<path d="M907 505 L918 512.5 L933 511 L932 500 L913 494 Z" fill="#fcd6c0"/>
<path d="M903 468 L903.5 481 L899.3 492 L902 494 L903 499 L904 503 L907 508.3 Q913 512 919 510.6 L927 500 L936 495 L940 475 L920 462 Z" fill="#fcd6c0" stroke="#333" stroke-width="0.8"/>
<path d="M901 465 Q910 453 929 452.6 Q946 455 950.3 472 Q950 486 942 492 L935 496.6 Q930 492 929 486 L921 486 L920 478 Q912 474 903.4 472 Z" fill="#3e2a1e" stroke="#222" stroke-width="0.8"/>
<path d="M915 460 Q928 456 935 464" fill="none" stroke="#7a4f2e" stroke-width="2.2" opacity="0.7"/>
<ellipse cx="928.5" cy="491" rx="3" ry="5" fill="#fcd6c0" stroke="#333" stroke-width="0.6"/>
<circle cx="914" cy="492" r="3.5" fill="#f6a6a0" opacity="0.55"/>
<path d="M904 484 Q907 483 909 485 M903 499 Q906 501 909 499" fill="none" stroke="#333" stroke-width="0.8"/>
<path d="M917.5 512 Q926 516 936 511.5" fill="none" stroke="#fff" stroke-width="1.8"/>
</g>
<rect x="359" y="641" width="674" height="45" fill="#f47b20"/>
<g clip-path="url(#pg)">
<circle cx="1006" cy="670" r="56" fill="#f47b20"/>
<circle cx="1006.5" cy="670.5" r="56" fill="none" stroke="#6e3608" stroke-width="2.6" opacity="0.65" filter="url(#blur1)"/>
<clipPath id="circ"><circle cx="1006" cy="670" r="55"/></clipPath>
<g clip-path="url(#circ)"><rect x="1027" y="610" width="6" height="76" fill="#f89a55" opacity="0.65"/><rect x="950" y="681" width="83" height="5" fill="#f8a468" opacity="0.75"/></g>
</g>
<text x="900.5" y="656" font-size="10.5" fill="#fff" font-weight="bold" textLength="40" lengthAdjust="spacingAndGlyphs">9-сабақ</text>
<text x="975" y="655" font-size="13.5" fill="#fff" font-weight="bold" textLength="16.5" lengthAdjust="spacingAndGlyphs">45</text>
<rect x="358" y="176" width="1" height="511" fill="#505050"/><rect x="1033" y="176" width="1" height="511" fill="#505050"/><rect x="358" y="686" width="676" height="1" fill="#505050"/>
<rect x="358.5" y="693.5" width="675" height="8" fill="url(#np)" stroke="#505050"/><rect x="0" y="699" width="1366" height="29" fill="#f0f0f0"/>
<path d="M552 713.5 L557 707.5 V719.5 Z" fill="#111"/><rect x="558.5" y="707.5" width="2" height="12" fill="#111"/><path d="M564.5 707.5 V719.5 L561.5 716 V711 Z" fill="#111"/>
<path d="M578.5 713.5 L585.5 707.5 V719.5 Z" fill="#111"/>
<rect x="597.5" y="703.5" width="115" height="19" fill="#fff" stroke="#acacac"/>
<text x="602.5" y="718" font-size="12.5" fill="#111" textLength="48" lengthAdjust="spacingAndGlyphs">45 / 148</text>
<path d="M703.5 712 H708.5 L706 715 Z" fill="#111"/>
<path d="M722 707.5 L730 713.5 L722 719.5 Z" fill="#111"/>
<path d="M745 707.5 V719.5 L748 716 V711 Z" fill="#111"/><rect x="749" y="707.5" width="2" height="12" fill="#111"/><path d="M752.5 707.5 L759 713.5 L752.5 719.5 Z" fill="#111"/>
<rect x="768.5" y="706.5" width="9" height="8" fill="#fff" stroke="#666" stroke-width="0.9"/><rect x="768.5" y="706.5" width="9" height="2" fill="#2e6cb5"/>
<rect x="774.5" y="712.5" width="10" height="8" fill="#fff" stroke="#555" stroke-width="0.9"/><path d="M774.5 715 H784.5 M774.5 717.5 H784.5 M777.5 712.5 V720.5 M781 712.5 V720.5" stroke="#555" stroke-width="0.7"/>
<path d="M785 709.5 H779 M781 707.5 L779 709.5 L781 711.5" fill="none" stroke="#3aa070" stroke-width="1.3"/>
<g opacity="0.45"><rect x="795.5" y="706.5" width="9" height="8" fill="#fff" stroke="#666" stroke-width="0.9"/><rect x="801.5" y="712.5" width="10" height="8" fill="#fff" stroke="#2e6cb5" stroke-width="0.9"/><path d="M801.5 715 H811.5 M801.5 717.5 H811.5 M804.5 712.5 V720.5 M808 712.5 V720.5" stroke="#2e6cb5" stroke-width="0.7"/><path d="M796 716.5 H802 M800 714.5 L802 716.5 L800 718.5" fill="none" stroke="#3aa070" stroke-width="1.3"/></g>
<rect x="1030.5" y="707.5" width="10" height="13" fill="#fff" stroke="#666" stroke-width="0.9"/><path d="M1032.5 710.5 H1038.5 M1032.5 713 H1038.5 M1032.5 715.5 H1038.5 M1032.5 718 H1038.5" stroke="#888" stroke-width="0.8"/>
<rect x="1050" y="705" width="24" height="18" fill="#d8b9e6"/>
<rect x="1056.5" y="705.5" width="11" height="11" fill="#fff" stroke="#666" stroke-width="0.9"/><path d="M1058.5 708.5 H1065.5 M1058.5 711 H1065.5 M1058.5 713.5 H1065.5" stroke="#888" stroke-width="0.8"/>
<rect x="1056.5" y="718.5" width="11" height="5" fill="#fff" stroke="#666" stroke-width="0.9"/>
<rect x="1079.5" y="707.5" width="7" height="13" fill="#fff" stroke="#666" stroke-width="0.9"/><rect x="1088.5" y="707.5" width="7" height="13" fill="#fff" stroke="#666" stroke-width="0.9"/>
<path d="M1081 711 H1085 M1081 714 H1085 M1081 717 H1085 M1090 711 H1094 M1090 714 H1094 M1090 717 H1094" stroke="#888" stroke-width="0.8"/>
<path d="M1105.5 706 V711.5 H1111.5 V706 M1113.5 706 V711.5 H1119.5 V706 M1105.5 722 V716 H1111.5 V722 M1113.5 722 V716 H1119.5 V722" fill="none" stroke="#666" stroke-width="0.9"/>
<path d="M1107 708 H1110 M1107 710 H1110 M1115 708 H1118 M1115 710 H1118 M1107 718 H1110 M1115 718 H1118" stroke="#888" stroke-width="0.7"/>
<rect x="1104" y="713.3" width="17" height="0.9" fill="#666"/>
<text x="1142" y="718.3" font-size="12.5" fill="#333" textLength="44" lengthAdjust="spacingAndGlyphs">79.76%</text>
<path d="M1203.5 711.5 H1209.5 L1206.5 715 Z" fill="#111"/>
<circle cx="1221.5" cy="713" r="7.2" fill="none" stroke="#333" stroke-width="1.1"/><path d="M1217.5 713 H1225.5" stroke="#333" stroke-width="1.2"/>
<rect x="1236" y="713" width="91" height="1" fill="#2a2a2a"/>
<rect x="1269" y="709" width="4" height="8" fill="#222"/><rect x="1281" y="710" width="1" height="7" fill="#222"/>
<circle cx="1339" cy="713" r="7.2" fill="none" stroke="#333" stroke-width="1.1"/><path d="M1335 713 H1343 M1339 709 V717" stroke="#333" stroke-width="1.2"/>
<defs><linearGradient id="tbg" x1="0" y1="0" x2="1" y2="0"><stop offset="0" stop-color="#3aaabf"/><stop offset="0.4" stop-color="#3596b0"/><stop offset="1" stop-color="#2c79a0"/></linearGradient></defs>
<rect x="0" y="728" width="1366" height="40" fill="url(#tbg)"/>
<rect x="0" y="727" width="1366" height="1" fill="#fafafa"/>
<path d="M11 738.5 L24 736.8 V749 H11 Z M25.5 736.5 L41 734.5 V749 H25.5 Z M11 750.5 H24 V762.8 L11 761 Z M25.5 750.5 H41 V765 L25.5 763 Z" fill="#fff"/>
<rect x="60.5" y="729.5" width="130" height="37" fill="#6fc2d4" fill-opacity="0.55" stroke="#9ad6e2" stroke-opacity="0.9"/>
<text x="104.5" y="752.2" font-size="12.5" fill="#fff" textLength="73.5" lengthAdjust="spacingAndGlyphs">Календарн...</text>
<path d="M68.5 736 Q68.5 732.5 72 732.5 H96.5 V760.5 H68.5 Z" fill="#fff" stroke="#1f48a8" stroke-width="1.1"/>
<path d="M84 733.5 H96 V750 L90 733.5 Z" fill="#b9cdf0"/>
<path d="M72 737 H77.5 L80 747 L82.5 737 H86 L88.5 747 L91 737 H96 L90.5 752 H86 L84 744 L82 752 H77.5 Z" fill="#1d5fd0"/>
<path d="M82 758 L96 751 L98 756 L86 761 Z" fill="#fff"/>
<path d="M73 755 L90 757" stroke="#c8d6ee" stroke-width="1"/>
<rect x="192.5" y="729.5" width="132" height="37" fill="#6fc2d4" fill-opacity="0.55" stroke="#9ad6e2" stroke-opacity="0.9"/>
<text x="237.5" y="752.2" font-size="12.5" fill="#fff" textLength="78.5" lengthAdjust="spacingAndGlyphs">Математика ...</text>
<path d="M200.5 736 Q200.5 732.5 204 732.5 H228.5 V760.5 H200.5 Z" fill="#fff" stroke="#1f48a8" stroke-width="1.1"/>
<path d="M216 733.5 H228 V750 L222 733.5 Z" fill="#b9cdf0"/>
<path d="M204 737 H209.5 L212 747 L214.5 737 H218 L220.5 747 L223 737 H228 L222.5 752 H218 L216 744 L214 752 H209.5 Z" fill="#1d5fd0"/>
<path d="M214 758 L228 751 L230 756 L218 761 Z" fill="#fff"/>
<path d="M205 755 L222 757" stroke="#c8d6ee" stroke-width="1"/>
<rect x="326.5" y="729.5" width="131" height="37" fill="#6fc2d4" fill-opacity="0.55" stroke="#9ad6e2" stroke-opacity="0.9"/>
<text x="371.5" y="752.2" font-size="12.5" fill="#fff" textLength="76.5" lengthAdjust="spacingAndGlyphs">математика ...</text>
<path d="M334.5 736 Q334.5 732.5 338 732.5 H362.5 V760.5 H334.5 Z" fill="#fff" stroke="#1f48a8" stroke-width="1.1"/>
<path d="M350 733.5 H362 V750 L356 733.5 Z" fill="#b9cdf0"/>
<path d="M338 737 H343.5 L346 747 L348.5 737 H352 L354.5 747 L357 737 H362 L356.5 752 H352 L350 744 L348 752 H343.5 Z" fill="#1d5fd0"/>
<path d="M348 758 L362 751 L364 756 L352 761 Z" fill="#fff"/>
<path d="M339 755 L356 757" stroke="#c8d6ee" stroke-width="1"/>
<rect x="460.5" y="729.5" width="133" height="37" fill="#6fc2d4" fill-opacity="0.55" stroke="#9ad6e2" stroke-opacity="0.9"/>
<text x="506" y="752.2" font-size="12.5" fill="#fff" textLength="75.5" lengthAdjust="spacingAndGlyphs">Отправленн...</text>
<circle cx="486" cy="748" r="15" fill="#db4437"/>
<path d="M486 748 L499 740.5 A15 15 0 0 1 482 762.5 Z" fill="#fcc934"/>
<path d="M486 748 L482 762.5 A15 15 0 0 1 473 740.5 Z" fill="#1e9e50"/>
<circle cx="486" cy="748" r="6.8" fill="#fff"/><circle cx="486" cy="748" r="5.2" fill="#4a88ee"/>
<rect x="597.5" y="729.5" width="128" height="37" fill="#6fc2d4" fill-opacity="0.55" stroke="#9ad6e2" stroke-opacity="0.9"/>
<text x="641.5" y="752.2" font-size="12.5" fill="#fff" textLength="75.5" lengthAdjust="spacingAndGlyphs">1-сынып пл...</text>
<path d="M615.5 733.2 L627.8 735.3 V760.3 L615.3 759.2 Z" fill="#e6c866"/>
<path d="M616.5 734.5 L626.5 736.3 V759 L616.5 758 Z" fill="#f3dc8a"/>
<path d="M608 732.2 L615.3 737.4 V763.4 L608 756.6 Z" fill="#f6e08e" stroke="#e8c65a" stroke-width="0.5"/>
<path d="M623 751 L629.3 752 V760.3 L623 759.5 Z" fill="#eccf5c"/><rect x="625.5" y="752.5" width="1.2" height="5.5" fill="#fff"/>
<rect x="728.5" y="729.5" width="133" height="37" fill="#6fc2d4" fill-opacity="0.55" stroke="#9ad6e2" stroke-opacity="0.9"/>
<text x="775.5" y="752.2" font-size="12.5" fill="#fff" textLength="74" lengthAdjust="spacingAndGlyphs">матем қосы...</text>
<path d="M746.5 733.2 L758.8 735.3 V760.3 L746.3 759.2 Z" fill="#e6c866"/>
<path d="M747.5 734.5 L757.5 736.3 V759 L747.5 758 Z" fill="#f3dc8a"/>
<path d="M739 732.2 L746.3 737.4 V763.4 L739 756.6 Z" fill="#f6e08e" stroke="#e8c65a" stroke-width="0.5"/>
<path d="M754 751 L760.3 752 V760.3 L754 759.5 Z" fill="#eccf5c"/><rect x="756.5" y="752.5" width="1.2" height="5.5" fill="#fff"/>
<rect x="866.5" y="729.5" width="130" height="37.5" fill="#ffffff" fill-opacity="0.27" stroke="#ffffff" stroke-opacity="0.6"/>
<path d="M874 732 H898 L905.8 740 V764 H874 Z" fill="#6b2470"/><path d="M899 732 H905.8 V739 Z" fill="#6b2470"/><path d="M898 731.5 L906.5 740" stroke="#8fcad8" stroke-width="1.3"/>
<path d="M877 734 L890 746 L903 762 L888 748 Z" fill="#8a4a92" opacity="0.7"/>
<path d="M896 740.5 A7.6 7.6 0 1 0 896.5 750.5" fill="none" stroke="#fff" stroke-width="4.2"/>
<path d="M891.5 748 Q895 749 896.5 745" fill="none" stroke="#fff" stroke-width="1.6"/><path d="M893 739 Q896 739.5 898 742" fill="none" stroke="#fff" stroke-width="1"/>
<text x="883.5" y="762" font-size="7.5" fill="#fff" font-weight="bold" textLength="14" lengthAdjust="spacingAndGlyphs">PDF</text>
<text x="910.5" y="752.2" font-size="12.5" fill="#fff" textLength="78.5" lengthAdjust="spacingAndGlyphs">Математика ...</text>
<circle cx="1015" cy="749" r="7.5" fill="#d42a2a"/><path d="M1009 751 Q1015 744 1021 746 M1009 754 Q1016 747 1022 749" stroke="#fff" stroke-width="1" fill="none"/>
<path d="M1031 745.5 H1034 L1038.5 741.5 V756.5 L1034 752.5 H1031 Z" fill="#fff"/><path d="M1041 745 Q1043 749 1041 753 M1043.5 743 Q1046.5 749 1043.5 755" stroke="#fff" stroke-width="1.1" fill="none"/>
<path d="M1063 741.5 L1071 756 H1055 Z" fill="#e8332a" stroke="#fff" stroke-width="0.6"/><rect x="1062.3" y="746" width="1.5" height="5" fill="#fff"/><rect x="1062.3" y="752.5" width="1.5" height="1.6" fill="#fff"/>
<circle cx="1087" cy="749" r="8" fill="#fff"/><circle cx="1087" cy="749" r="5.5" fill="#f08020"/><circle cx="1087" cy="749" r="2.5" fill="#ffe000"/><circle cx="1087" cy="743.5" r="2" fill="#e23"/><circle cx="1092" cy="751" r="2" fill="#e23"/><circle cx="1082" cy="751" r="2" fill="#e23"/>
<ellipse cx="1111" cy="749" rx="8" ry="2.2" fill="#b8d8f8" transform="rotate(-20 1111 749)"/><circle cx="1111" cy="749" r="4.3" fill="#3a6fd8"/>
<circle cx="1137" cy="746" r="5.5" fill="#2f7fd8"/><rect x="1136.2" y="742.5" width="1.6" height="4.5" fill="#fff"/><rect x="1129" y="751" width="8" height="6" fill="#ddd" stroke="#333" stroke-width="0.6"/>
<path d="M1152 745.5 H1155 L1159.5 741.5 V756.5 L1155 752.5 H1152 Z" fill="#e85a20" stroke="#333" stroke-width="0.4"/><path d="M1162 745 Q1164 749 1162 753 M1164.5 743 Q1167.5 749 1164.5 755" stroke="#333" stroke-width="1" fill="none"/>
<circle cx="1183.5" cy="748.5" r="8" fill="#f0a020"/><path d="M1183.5 748.5 L1176 745 A8 8 0 0 1 1188 741.5 Z" fill="#2a88d8"/><path d="M1183.5 748.5 L1188 741.5 A8 8 0 0 1 1191 752 Z" fill="#3cb050"/>
<rect x="1207.5" y="743.5" width="6" height="12" rx="1" fill="none" stroke="#fff" stroke-width="1.3"/><rect x="1209" y="745" width="3" height="9" fill="#fff"/><path d="M1201 741 V746 M1204 741 V746 M1200 746 H1205 V750 H1200 Z M1202.5 750 V756" stroke="#fff" stroke-width="1.1" fill="none"/>
<g fill="#fff"><rect x="1223" y="753" width="2" height="2"/><rect x="1226" y="751" width="2" height="4"/><rect x="1229" y="749" width="2" height="6"/><rect x="1232" y="746.5" width="2" height="8.5"/><rect x="1235.5" y="744" width="2" height="11"/></g>
<text x="1254.5" y="753" font-size="12.5" fill="#fff" textLength="21" lengthAdjust="spacingAndGlyphs">ҚАЗ</text>
<text x="1309.5" y="744.6" font-size="12.5" fill="#fff" textLength="22" lengthAdjust="spacingAndGlyphs">4:55</text>
<text x="1293" y="762" font-size="12.5" fill="#fff" textLength="54.5" lengthAdjust="spacingAndGlyphs">30.08.2016</text>
</svg>
</body></html>
